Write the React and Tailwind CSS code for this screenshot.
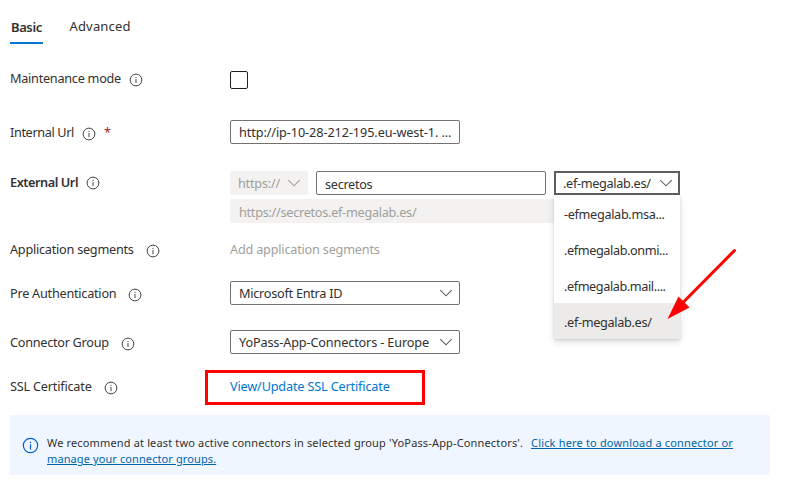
import React from "react";

function InfoIcon({ className }) {
  return (
    <svg viewBox="0 0 14 14" className={className} fill="none" stroke="currentColor">
      <circle cx="7" cy="7" r="5.9" />
      <path d="M7 6v4.2M7 3.9v1.1" />
    </svg>
  );
}

function Chevron({ className }) {
  return (
    <svg viewBox="0 0 14 8" className={`h-2 w-3.5 shrink-0 ${className}`} fill="none" stroke="currentColor" strokeWidth="1.1">
      <path d="M1.3 1.2L7 6.8l5.7-5.6" />
    </svg>
  );
}

function Row({ label, labelClass = "", gap = "ml-2", iconTop = "mt-[3px]", height, required, children }) {
  return (
    <div className={`flex items-start ${height}`}>
      <div className="flex h-6 w-[220px] shrink-0 items-center">
        <span className={labelClass}>{label}</span>
        <InfoIcon className={`size-3.5 shrink-0 text-[#444] ${iconTop} ${gap}`} />
        {required && <span className="ml-2 text-[#a4262c]">*</span>}
      </div>
      {children}
    </div>
  );
}

const field = "flex h-6 items-center rounded-[2px] border border-[#75716e] px-2";

const suffixes = [
  { text: "-efmegalab.msa...", style: "tracking-[-0.34px]" },
  { text: ".efmegalab.onmi...", style: "tracking-[-0.4px]" },
  { text: ".efmegalab.mail....", style: "tracking-[-0.42px]" },
  { text: ".ef-megalab.es/", style: "tracking-[-0.33px] bg-[#edebe9]" },
];

export default function App() {
  return (
    <div className="relative h-[486px] w-[802px] overflow-hidden bg-white px-[10px] font-['Noto_Sans',sans-serif] text-[12.7px] leading-5 whitespace-nowrap text-[#323130]">
      <div className="flex h-[66px] items-start text-[13px]">
        <div className="mt-[17px] h-[27px] w-[33px] border-b-2 border-[#0078d4] pl-px font-semibold tracking-[-0.4px]">Basic</div>
        <div className="mt-4 ml-[26.5px] tracking-[0.16px]">Advanced</div>
      </div>

      <Row label="Maintenance mode" labelClass="tracking-[-0.27px]" height="h-[54px]">
        <div className="mt-[5px] size-[18px] rounded-[2px] border border-[#201f1e]" />
      </Row>
      <Row label="Internal Url" labelClass="tracking-[-0.37px]" height="h-[51px]" required>
        <div className={`${field} w-[230px] tracking-[-0.1px]`}>http://ip-10-28-212-195.eu-west-1. ...</div>
      </Row>
      <Row label="External Url" labelClass="-mt-0.5 font-semibold tracking-[-0.43px]" iconTop="mt-0" height="h-[66px]">
        <div className="flex flex-col gap-1">
          <div className="flex gap-2">
            <div className="flex h-6 w-[78px] items-center justify-between rounded-[2px] bg-[#f3f2f1] pr-[7px] pl-2 tracking-[-0.23px] text-[#a19f9d]">
              https://
              <Chevron className="text-[#a19f9d]" />
            </div>
            <div className={`${field} w-[230px] tracking-[-0.3px]`}>
              <span className="mt-0.5">secretos</span>
            </div>
            <div className="relative flex h-6 w-[126px] items-center justify-between border-2 border-[#605e5c] pr-[5px] pl-[7px] tracking-[-0.33px]">
              .ef-megalab.es/
              <Chevron className="text-[#605e5c]" />
              <div className="absolute top-[22px] -left-0.5 z-10 w-[126px] bg-white shadow-[0_3px_7px_rgba(0,0,0,0.13),0_1px_2px_rgba(0,0,0,0.11)]">
                {suffixes.map((s) => (
                  <div key={s.text} className={`flex h-9 items-center pt-px pl-[10px] ${s.style}`}>
                    {s.text}
                  </div>
                ))}
              </div>
            </div>
          </div>
          <div className="flex h-6 w-[450px] items-center rounded-[2px] bg-[#f3f2f1] px-[9px] pt-0.5 tracking-[-0.28px] text-[#a19f9d]">
            https://secretos.ef-megalab.es/
          </div>
        </div>
      </Row>
      <Row label="Application segments" labelClass="tracking-[-0.25px]" gap="ml-3" height="h-[44px]">
        <span className="mt-0.5 tracking-[-0.21px] text-[#a19f9d]">Add application segments</span>
      </Row>
      <Row label="Pre Authentication" labelClass="tracking-[-0.25px]" gap="ml-3" height="h-[49px]">
        <div className={`${field} w-[230px] justify-between pr-1.5 tracking-[-0.26px]`}>
          Microsoft Entra ID
          <Chevron className="text-[#605e5c]" />
        </div>
      </Row>
      <Row label="Connector Group" labelClass="tracking-[-0.28px]" gap="ml-3" height="h-[44px]">
        <div className={`${field} w-[230px] justify-between pr-1.5 tracking-[-0.15px]`}>
          YoPass-App-Connectors - Europe
          <Chevron className="text-[#605e5c]" />
        </div>
      </Row>
      <Row label="SSL Certificate" labelClass="tracking-[-0.21px]" gap="ml-3" height="h-[41px]">
        <div className="relative mt-0.5 tracking-[-0.17px] text-[#0078d4]">
          View/Update SSL Certificate
          <div className="absolute -top-[6px] -left-[25px] h-[35px] w-[220px] border-3 border-[#ff0000]" />
        </div>
      </Row>

      <div className="flex h-[60px] w-[760px] items-start bg-[#eff6ff] pl-3">
        <InfoIcon className="mt-[22px] size-[17px] shrink-0 text-[#015cda]" />
        <div className="mt-5 ml-2 text-[11px] leading-4">
          <div className="flex gap-2">
            <span className="tracking-[0.15px]">We recommend at least two active connectors in selected group 'YoPass-App-Connectors'.</span>
            <span className="tracking-[0.17px] text-[#0065a8] underline">Click here to download a connector or</span>
          </div>
          <span className="tracking-[0.1px] text-[#0065a8] underline">manage your connector groups.</span>
        </div>
      </div>

      <svg viewBox="0 0 70 72" className="absolute top-[248px] left-[667px] z-20 h-[72px] w-[70px]">
        <path d="M67.5 2.5L15 55.5" stroke="#ff0000" strokeWidth="3" strokeLinecap="round" />
        <path d="M0.5 71L11.5 48.5L22.5 59.5Z" fill="#ff0000" />
      </svg>
    </div>
  );
}
